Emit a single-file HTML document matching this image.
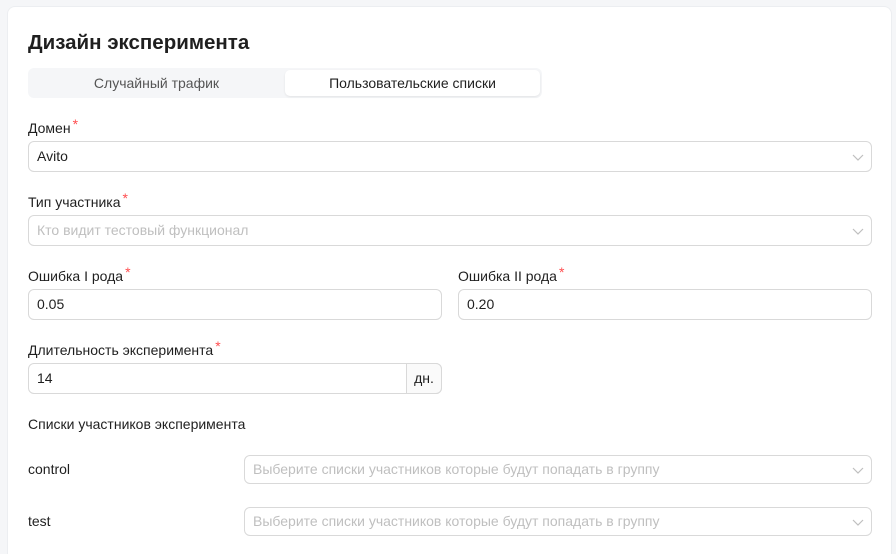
<!DOCTYPE html>
<html style="width:896px;height:554px;overflow:hidden"><head><meta charset="utf-8"><style>
*{box-sizing:border-box;margin:0;padding:0}
body{width:896px;height:554px;background:#f5f6f8;font-family:"Liberation Sans",sans-serif;color:#1f1f1f;position:relative;overflow:hidden}
.card{position:absolute;left:7px;top:6px;width:885px;height:548px;background:#fff;border:1px solid #eceef1;border-bottom:none;border-radius:8px 8px 0 0}
.a{position:absolute}
h1{position:absolute;left:28px;top:31px;font-size:20.5px;font-weight:bold;color:#1f1f1f}
.tabs{left:28px;top:68px;width:514px;height:30px;background:#f5f6f8;border-radius:6px}
.tab{font-size:14px;text-align:center;line-height:26px}
.lbl{font-size:14px;color:#1f1f1f}
.lbl b{color:#ff4d4f;font-weight:normal;position:relative;top:-4px;margin-left:2px}
.in{border:1px solid #d9d9d9;border-radius:6px;height:31px;font-size:14px;line-height:29px;padding-left:8px;background:#fff}
.ph{color:#bfbfbf}
.chev{position:absolute;right:7px;top:9px}
</style></head><body>
<div class="card"></div>
<h1>Дизайн эксперимента</h1>
<div class="a tabs"></div>
<div class="a tab" style="left:28px;top:70px;width:257px;color:#555">Случайный трафик</div>
<div class="a tab" style="left:285px;top:70px;width:255px;height:26px;background:#fff;border-radius:5px;box-shadow:0 1px 2px rgba(0,0,0,.08)">Пользовательские списки</div>

<div class="a lbl" style="left:28px;top:120px">Домен<b>*</b></div>
<div class="a in" style="left:28px;top:141px;width:844px">Avito<svg class="chev" width="12" height="12" viewBox="0 0 12 12"><path d="M1 4l5 5 5-5" fill="none" stroke="#bfbfbf" stroke-width="1.2"/></svg></div>

<div class="a lbl" style="left:28px;top:194px">Тип участника<b>*</b></div>
<div class="a in ph" style="left:28px;top:215px;width:844px">Кто видит тестовый функционал<svg class="chev" width="12" height="12" viewBox="0 0 12 12"><path d="M1 4l5 5 5-5" fill="none" stroke="#bfbfbf" stroke-width="1.2"/></svg></div>

<div class="a lbl" style="left:28px;top:268px">Ошибка I рода<b>*</b></div>
<div class="a in" style="left:28px;top:289px;width:414px">0.05</div>
<div class="a lbl" style="left:458px;top:268px">Ошибка II рода<b>*</b></div>
<div class="a in" style="left:458px;top:289px;width:414px">0.20</div>

<div class="a lbl" style="left:28px;top:342px">Длительность эксперимента<b>*</b></div>
<div class="a in" style="left:28px;top:363px;width:414px">14</div>
<div class="a" style="left:406px;top:363px;width:36px;height:31px;border:1px solid #d9d9d9;border-radius:0 6px 6px 0;background:#fafafa;font-size:14px;line-height:29px;text-align:center">дн.</div>

<div class="a lbl" style="left:28px;top:416px">Списки участников эксперимента</div>
<div class="a lbl" style="left:28px;top:461px">control</div>
<div class="a in ph" style="left:244px;top:455px;width:628px;height:29px;line-height:27px">Выберите списки участников которые будут попадать в группу<svg class="chev" width="12" height="12" viewBox="0 0 12 12" style="top:8px"><path d="M1 4l5 5 5-5" fill="none" stroke="#bfbfbf" stroke-width="1.2"/></svg></div>
<div class="a lbl" style="left:28px;top:513px">test</div>
<div class="a in ph" style="left:244px;top:507px;width:628px;height:29px;line-height:27px">Выберите списки участников которые будут попадать в группу<svg class="chev" width="12" height="12" viewBox="0 0 12 12" style="top:8px"><path d="M1 4l5 5 5-5" fill="none" stroke="#bfbfbf" stroke-width="1.2"/></svg></div>
</body></html>
